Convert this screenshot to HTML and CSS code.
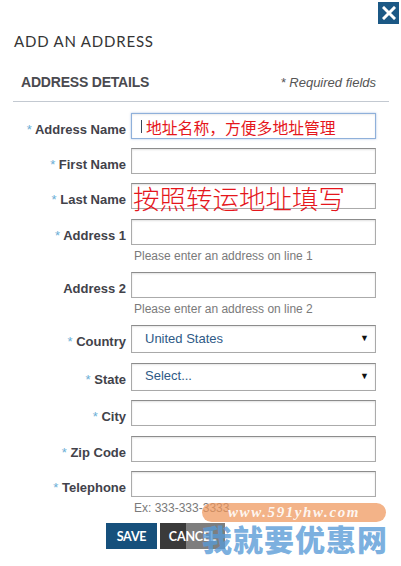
FILE: index.html
```html
<!DOCTYPE html>
<html lang="en">
<head>
<meta charset="utf-8">
<title>Add an address</title>
<link rel="stylesheet" href="styles.css">
</head>
<body>
<div class="modal">
  <div class="topbar">
    <button class="close" aria-label="Close">
      <svg width="14" height="14" viewBox="0 0 14 14"><path d="M2 2 L12 12 M12 2 L2 12" stroke="#fff" stroke-width="3" stroke-linecap="square"/></svg>
    </button>
  </div>
  <h1 class="title">ADD AN ADDRESS</h1>
  <div class="section-head">
    <h2 class="section-title">ADDRESS DETAILS</h2>
    <span class="req">* Required fields</span>
  </div>
  <form class="form">
    <div class="field">
      <label class="label"><span class="star">*</span> Address Name</label>
      <div class="input focused"><span class="caret"></span><span class="note note-sm">地址名称，方便多地址管理</span></div>
    </div>
    <div class="field">
      <label class="label"><span class="star">*</span> First Name</label>
      <input class="input" type="text">
    </div>
    <div class="field">
      <label class="label"><span class="star">*</span> Last Name</label>
      <div class="input"><span class="note note-lg">按照转运地址填写</span></div>
    </div>
    <div class="field">
      <label class="label"><span class="star">*</span> Address 1</label>
      <input class="input" type="text">
      <div class="hint">Please enter an address on line 1</div>
    </div>
    <div class="field">
      <label class="label">Address 2</label>
      <input class="input" type="text">
      <div class="hint">Please enter an address on line 2</div>
    </div>
    <div class="field field-select">
      <label class="label"><span class="star">*</span> Country</label>
      <div class="select"><span>United States</span><span class="arrow">▼</span></div>
    </div>
    <div class="field field-select">
      <label class="label"><span class="star">*</span> State</label>
      <div class="select"><span>Select...</span><span class="arrow">▼</span></div>
    </div>
    <div class="field">
      <label class="label"><span class="star">*</span> City</label>
      <input class="input" type="text">
    </div>
    <div class="field">
      <label class="label"><span class="star">*</span> Zip Code</label>
      <input class="input" type="text">
    </div>
    <div class="field">
      <label class="label"><span class="star">*</span> Telephone</label>
      <input class="input" type="text">
      <div class="hint">Ex: 333-333-3333</div>
    </div>
    <div class="actions">
      <button type="button" class="btn btn-save">SAVE</button>
      <button type="button" class="btn btn-cancel">CANCEL</button>
    </div>
  </form>
  <div class="watermark" aria-hidden="true">
    <div class="wm-veil"></div>
    <div class="wm-pill">www.591yhw.com</div>
    <div class="wm-cn">我就要优惠网</div>
  </div>
</div>
</body>
</html>
```

FILE: styles.css
```css
* { box-sizing: border-box; }
html, body { margin: 0; padding: 0; background: #fff; }
body {
  width: 401px;
  height: 566px;
  overflow: hidden;
  font-family: "Liberation Sans", Arial, sans-serif;
  color: #444;
}
.modal { position: relative; width: 401px; height: 566px; }

.topbar { display: flex; justify-content: flex-end; padding: 2px 2px 0 0; }
.close {
  width: 21px; height: 22px; padding: 0; border: 0;
  background: #1b5885;
  display: flex; align-items: center; justify-content: center;
}

.title {
  margin: 8px 0 0 14px;
  font-family: Lato, "Noto Sans", sans-serif;
  font-weight: 400;
  font-size: 15px;
  line-height: 18px;
  letter-spacing: 0.8px;
  color: #353535;
}

.section-head {
  display: flex; justify-content: space-between; align-items: baseline;
  margin: 24px 12px 0 13px;
  padding: 0 13px 10px 8px;
  border-bottom: 1px solid #c3c9d1;
  line-height: 16px;
}
.section-title {
  margin: 0;
  font-size: 14px; font-weight: 700;
  letter-spacing: -0.2px;
  color: #4a4a4f;
}
.req { font-size: 13px; font-style: italic; color: #555; }

.form { padding-top: 10.5px; }
.field {
  display: grid;
  grid-template-columns: 126px 245px;
  column-gap: 5px;
  margin-bottom: 9.4px;
}
.label {
  grid-column: 1; grid-row: 1;
  align-self: end;
  text-align: right;
  font-size: 13px; font-weight: 700;
  line-height: 16px;
  padding-bottom: 1px;
  color: #42424a;
  white-space: nowrap;
}
.field-select .label { padding-bottom: 3px; }
.star { color: #6aaed6; font-weight: 400; }

.input {
  grid-column: 2; grid-row: 1;
  position: relative;
  display: flex; align-items: center;
  width: 245px; height: 26px;
  margin: 0; padding: 0 6px;
  border: 1px solid #ababab;
  border-top-color: #8c8c8c;
  box-shadow: inset 0 1px 2px rgba(0,0,0,0.12);
  background: #fff;
  font: 13px "Liberation Sans", Arial, sans-serif;
  outline: none;
}
.input.focused {
  border-color: #8fb0da;
  box-shadow: 0 0 2px rgba(110,150,210,0.6), inset 0 1px 2px rgba(0,0,0,0.08);
  padding-left: 9px;
}
.caret { width: 1px; height: 13px; background: #37475a; margin-right: 5px; margin-top: 1px; }
.note {
  color: #e5161c;
  font-family: "Noto Sans CJK SC", sans-serif;
  white-space: nowrap;
}
.note-sm { font-size: 15.8px; line-height: 16px; margin-top: 5px; margin-left: -1px; }
.note-lg { font-size: 26.5px; line-height: 26px; margin-left: -5px; margin-top: 4px; font-weight: 300; }

.hint {
  grid-column: 2; grid-row: 2;
  margin-top: 5px;
  padding-left: 3px;
  font-size: 12px;
  line-height: 13px;
  color: #7a7a7a;
}

.select {
  grid-column: 2; grid-row: 1;
  display: flex; align-items: center; justify-content: space-between;
  width: 245px; height: 28px;
  padding: 0 6px 2px 13px;
  border: 1px solid #a9a9a9;
  border-top-color: #8c8c8c;
  box-shadow: inset 0 1px 2px rgba(0,0,0,0.1);
  font-size: 13px;
  color: #2e5a86;
}
.arrow { font-size: 9px; color: #111; }

.actions {
  display: flex; gap: 3px;
  padding-left: 106px;
  margin-top: -1px;
}
.btn {
  height: 25.5px; border: 0; padding: 0;
  font-family: Lato, "Noto Sans", sans-serif;
  font-weight: 700; font-size: 12.5px;
  color: #fff;
  letter-spacing: -0.2px;
}
.btn-save { width: 51px; background: #16507c; }
.btn-cancel { width: 65px; background: #3a3a3a; }

.watermark { position: absolute; left: 0; top: 0; width: 401px; height: 566px; pointer-events: none; }
.wm-veil {
  position: absolute; left: 186px; top: 523px; width: 40px; height: 26px;
  background: rgba(255,255,255,0.35);
}
.wm-pill {
  position: absolute; left: 202px; top: 503px; width: 184px; height: 19px;
  border-radius: 10px;
  background: rgba(238,150,90,0.72);
  color: rgba(255,255,255,0.9);
  font-family: "Liberation Serif", serif;
  font-style: italic; font-weight: 700;
  font-size: 15px; line-height: 19px;
  letter-spacing: 1.6px;
  text-align: center;
}
.wm-cn {
  position: absolute; left: 202px; top: 520px;
  font-family: "Noto Sans CJK SC", sans-serif;
  font-weight: 900;
  font-size: 30px; line-height: 36px;
  letter-spacing: 1px;
  color: rgba(88,155,215,0.8);
  white-space: nowrap;
}
```
